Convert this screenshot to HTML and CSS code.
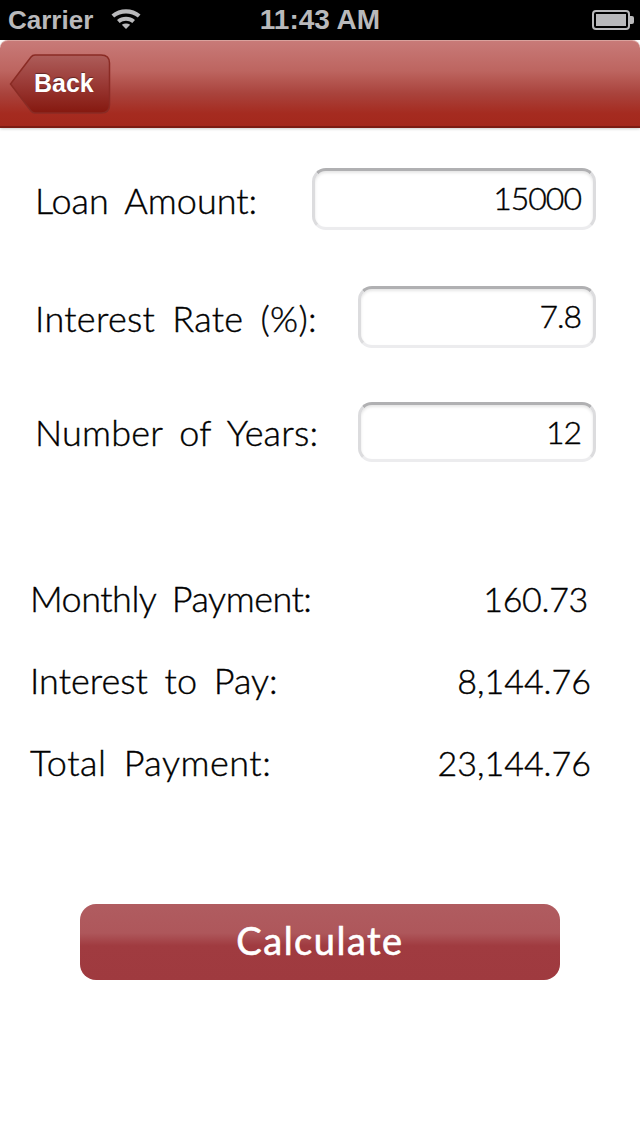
FILE: index.html
```html
<!DOCTYPE html>
<html lang="en">
<head>
    <meta charset="UTF-8">
    <title>Loan Calculator</title>
    <link rel="stylesheet" href="styles.css">
</head>
<body>
    <!-- Status bar -->
    <div class="status-bar">
        <div class="status-left">
            <span>Carrier</span>
            <svg class="wifi" width="32" height="22" viewBox="0 0 32 22">
                <path d="M1.5 7.5 C9.5 0.5 22.5 0.5 30.5 7.5 L27.8 10.5 C21 5 11 5 4.2 10.5 Z" fill="#b9b9bb"/>
                <path d="M7 13 C12 8.8 20 8.8 25 13 L22.3 16 C18.3 12.9 13.7 12.9 9.7 16 Z" fill="#b9b9bb"/>
                <path d="M11.8 17.8 C14.4 15.9 17.6 15.9 20.2 17.8 L16 22 Z" fill="#b9b9bb"/>
            </svg>
        </div>
        <div class="status-time">11:43 AM</div>
        <div class="status-right">
            <svg width="42" height="20" viewBox="0 0 42 20">
                <rect x="1" y="1" width="36" height="18" rx="3" fill="none" stroke="#b9b9bb" stroke-width="2"/>
                <rect x="4" y="4" width="30" height="12" fill="#b9b9bb"/>
                <path d="M38 6 h2 a2 2 0 0 1 2 2 v4 a2 2 0 0 1 -2 2 h-2 Z" fill="#b9b9bb"/>
            </svg>
        </div>
    </div>

    <!-- Nav bar -->
    <div class="nav-bar">
        <div class="back-btn">
            <svg class="back-shape" width="102" height="60" viewBox="0 0 102 60">
                <defs>
                    <linearGradient id="backFill" x1="0" y1="0" x2="0" y2="1">
                        <stop offset="0" stop-color="#ad5d5a"/>
                        <stop offset="0.45" stop-color="#9c3d39"/>
                        <stop offset="1" stop-color="#85180f"/>
                    </linearGradient>
                </defs>
                <path d="M1.5 30 L22 3 Q23.5 1 26 1 H92 Q100.500 1 100.500 9 V51 Q100.500 59 92 59 H26 Q23.5 59 22 57 Z" fill="url(#backFill)" stroke="#8a2b24" stroke-width="1.500"/>
            </svg>
            <span class="back-label">Back</span>
        </div>
    </div>

    <div class="content">
        <!-- Inputs -->
        <div class="form-row row-amount">
            <div class="form-label">Loan Amount:</div>
            <div class="field field-wide">15000</div>
        </div>
        <div class="form-row row-rate">
            <div class="form-label label-rate">Interest Rate (%):</div>
            <div class="field">7.8</div>
        </div>
        <div class="form-row row-years">
            <div class="form-label label-years">Number of Years:</div>
            <div class="field field-short">12</div>
        </div>

        <!-- Results -->
        <div class="results">
            <div class="result-row">
                <div class="label-monthly">Monthly Payment:</div>
                <div class="result-value value-monthly">160.73</div>
            </div>
            <div class="result-row">
                <div>Interest to Pay:</div>
                <div class="result-value">8,144.76</div>
            </div>
            <div class="result-row">
                <div class="label-total">Total Payment:</div>
                <div class="result-value">23,144.76</div>
            </div>
        </div>

        <div class="calc-btn">Calculate</div>
    </div>
</body>
</html>
```

FILE: styles.css
```css
* {
    box-sizing: border-box;
}
body {
    width: 640px;
    height: 1136px;
    margin: 0;
    overflow: hidden;
    background-color: #fff;
    color: #000;
    font-family: Lato, "Open Sans", sans-serif;
}
.status-bar {
    display: grid;
    grid-template-columns: 1fr auto 1fr;
    align-items: center;
    height: 40px;
    padding: 0 6px 0 8px;
    background-color: #000;
    color: #b9b9bb;
    font-family: "Liberation Sans", Arial, sans-serif;
    font-size: 26px;
    font-weight: bold;
}
.status-left {
    display: flex;
    align-items: center;
    gap: 17px;
}
.status-time {
    margin-left: -2px;
    font-size: 28px;
}
.wifi {
    margin-top: -4px;
}
.status-right {
    display: flex;
    justify-content: flex-end;
}
.nav-bar {
    display: flex;
    align-items: center;
    height: 88px;
    padding-left: 9px;
    border-top: 1px solid #d9a29d;
    border-bottom: 2px solid #7c1c13;
    border-radius: 8px 8px 0 0;
    background: linear-gradient(#c87a78 0%, #bd6560 35%, #a9433c 62%, #a52b20 85%, #a4281c 100%);
    box-shadow: 0 1px 3px rgba(0,0,0,0.2);
}
.back-btn {
    position: relative;
    display: flex;
    align-items: center;
    width: 102px;
    height: 60px;
    padding-left: 25px;
}
.back-shape {
    position: absolute;
    top: 0;
    left: 0;
}
.back-label {
    position: relative;
    color: #fff;
    font-family: "Liberation Sans", Arial, sans-serif;
    font-size: 25px;
    font-weight: bold;
    text-shadow: 0 -1px 1px rgba(0,0,0,0.4);
}
.content {
    padding: 40px 44px 0 35px;
}
.form-row {
    display: flex;
    justify-content: space-between;
    align-items: center;
    font-size: 36px;
    font-weight: 300;
    word-spacing: 7px;
    -webkit-text-stroke: 0.4px #000;
}
.form-label {
    padding-top: 2px;
}
.label-rate {
    letter-spacing: 0.3px;
}
.label-years {
    padding-top: 0;
    letter-spacing: 0.2px;
}
.row-rate {
    margin-top: 56px;
}
.row-years {
    margin-top: 54px;
}
.field {
    width: 238px;
    height: 62px;
    padding-right: 12px;
    border: 3px solid #ececee;
    border-top-color: #b0b0b2;
    border-left-color: #dcdcde;
    border-right-color: #dcdcde;
    border-radius: 14px;
    background-color: #fff;
    box-shadow: inset 0 2px 3px rgba(0,0,0,0.1);
    line-height: 54px;
    text-align: right;
    font-size: 32px;
    letter-spacing: -1px;
}
.field-wide {
    width: 284px;
}
.field-short {
    height: 60px;
}
.results {
    display: flex;
    flex-direction: column;
    gap: 36px;
    margin: 113px 5px 0 -5px;
    font-size: 36px;
    font-weight: 300;
    word-spacing: 7px;
    -webkit-text-stroke: 0.4px #000;
}
.result-row {
    display: flex;
    justify-content: space-between;
    align-items: center;
    height: 46px;
}
.label-monthly {
    letter-spacing: -0.5px;
}
.label-total {
    letter-spacing: 0.5px;
}
.result-value {
    font-size: 34px;
}
.value-monthly {
    margin-right: 3px;
    letter-spacing: -0.3px;
}
.calc-btn {
    width: 480px;
    height: 76px;
    margin: 119px 0 0 45px;
    border-radius: 16px;
    background: linear-gradient(#b05c60 0%, #ae575b 38%, #a03b40 55%, #9f3a3f 100%);
    color: #fff;
    font-size: 38px;
    font-weight: 400;
    letter-spacing: 1.5px;
    line-height: 72px;
    text-align: center;
    -webkit-text-stroke: 0.6px #fff;
}
```
